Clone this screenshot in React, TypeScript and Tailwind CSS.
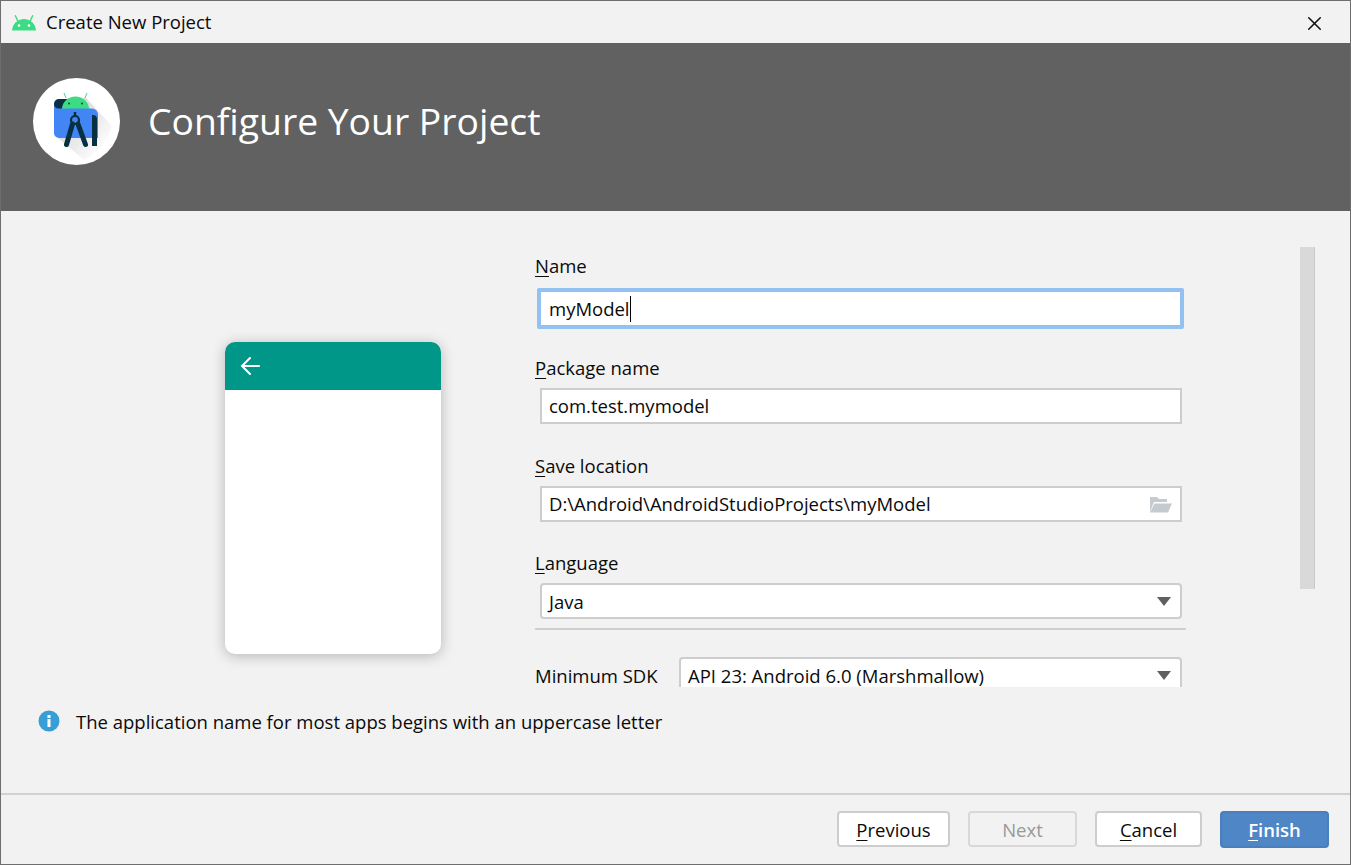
import { X } from "lucide-react";

function AndroidHead({ className }: { className?: string }) {
  return (
    <svg viewBox="0 0 24 17" className={className}>
      <path d="M0 16.500C.4 10 5.500 5 12 5s11.600 5 12 11.500z" fill="#3ddc84" />
      <path d="M5.800 7 3.400 1.800M18.200 7 20.600 1.800" stroke="#3ddc84" strokeWidth="1.500" strokeLinecap="round" />
      <circle cx="7" cy="11.500" r="1.300" fill="#fff" />
      <circle cx="17" cy="11.500" r="1.300" fill="#fff" />
    </svg>
  );
}

function StudioLogo() {
  return (
    <div className="flex h-[87px] w-[87px] shrink-0 items-center justify-center rounded-full bg-white">
      <svg viewBox="33 78 87 87" className="h-[87px] w-[87px]">
        <defs>
          <linearGradient id="logoShadow" x1="0.250" y1="0.250" x2="0.850" y2="0.850">
            <stop offset="0" stopColor="#d8d8d8" />
            <stop offset="1" stopColor="#ffffff" />
          </linearGradient>
        </defs>
        <path d="M85 97 112 126Q106 148 84 160L58 138z" fill="url(#logoShadow)" />
        <path d="M60 99h10v10H58l-4 1v-6a5 5 0 0 1 6-5z" fill="#073042" />
        <path d="M62 109a13.500 12.500 0 0 1 27 0z" fill="#3ddc84" />
        <path d="M66 98 64 93M85 98l2-5" stroke="#3ddc84" strokeWidth="1" />
        <circle cx="69" cy="103.500" r="0.900" fill="#073042" />
        <circle cx="82" cy="103.500" r="0.900" fill="#073042" />
        <path d="M54 104a4.500 4.500 0 0 0 4.500 4.500H92a6 6 0 0 1 6 6V138H59a5 5 0 0 1-5-5z" fill="#4285f4" />
        <path d="M92 115h1a4 4 0 0 1 4 3V146h-5z" fill="#073042" />
        <path d="M75 112v4" stroke="#073042" strokeWidth="2.500" />
        <circle cx="75" cy="120" r="4" fill="#4285f4" stroke="#073042" strokeWidth="2.200" />
        <path d="M72.500 124 66.500 144.500M78 124 85.500 144.500" stroke="#073042" strokeWidth="5" strokeLinecap="round" />
      </svg>
    </div>
  );
}

function Label({ mark, rest }: { mark: string; rest: string }) {
  return (
    <div className="h-[24px] text-[18.500px] leading-[24px]">
      <span className="underline decoration-1 underline-offset-[3px]">{mark}</span>
      {rest}
    </div>
  );
}

function Caret() {
  return (
    <svg viewBox="0 0 14 9" className="h-[9px] w-[14px]">
      <path d="M0 0h14L7 9z" fill="#606060" />
    </svg>
  );
}

function TextField({ value, children }: { value: string; children?: React.ReactNode }) {
  return (
    <div className="mt-[8px] ml-[5px] flex h-[36px] w-[642px] items-center justify-between border-2 border-[#cdcdcd] bg-white pr-[7px] pl-[7px] text-[18.500px]">
      <span>{value}</span>
      {children}
    </div>
  );
}

function Button({ mark, rest, className }: { mark: string; rest: string; className: string }) {
  return (
    <div className={`flex h-[36px] items-center justify-center rounded-[4px] border-2 pt-[1px] text-[18.500px] ${className}`}>
      <span className="underline decoration-1 underline-offset-[3px]">{mark}</span>
      {rest}
    </div>
  );
}

export default function App() {
  return (
    <div
      className="flex h-[865px] w-[1351px] flex-col overflow-hidden border border-[#6e6e6e] bg-[#f2f2f2] text-[#0a0a0a]"
      style={{ fontFamily: '"Open Sans", "Noto Sans", sans-serif' }}
    >
      {/* Title bar */}
      <div className="flex h-[42px] shrink-0 items-center justify-between pr-[24px] pl-[11px]">
        <div className="flex items-center gap-[10px] text-[18.500px]">
          <AndroidHead className="h-[17px] w-[24px]" />
          <span>Create New Project</span>
        </div>
        <X size={23} strokeWidth={1.600} className="mt-[2px] text-[#111]" />
      </div>

      {/* Header */}
      <div className="flex h-[168px] shrink-0 items-center gap-[28px] bg-[#616161] pb-[12px] pl-[32px]">
        <StudioLogo />
        <span className="text-[37.300px] text-white">Configure Your Project</span>
      </div>

      {/* Body */}
      <div className="flex h-[476px] shrink-0">
        <div className="w-[534px] shrink-0 pt-[131px] pl-[224px]">
          <div className="h-[312px] w-[216px] overflow-hidden rounded-[10px] bg-white shadow-[0_2px_14px_rgba(0,0,0,0.25)]">
            <div className="flex h-[48px] items-center bg-[#009688] pl-[15px]">
              <svg viewBox="0 0 20 20" className="h-[20px] w-[20px]">
                <path d="M19 10H2M10 2 2 10l8 8" fill="none" stroke="#fff" strokeWidth="2" strokeLinecap="round" />
              </svg>
            </div>
          </div>
        </div>

        <div className="h-[476px] w-[652px] shrink-0 overflow-hidden pt-[43px]">
          <Label mark="N" rest="ame" />
          <div className="mt-[10px] ml-[2px] flex h-[41px] w-[647px] items-center rounded-[2px] border-4 border-[#93c1f1] bg-white pl-[8px] text-[18.500px]">
            <span>myModel</span>
            <span className="h-[26px] w-[1px] bg-black" />
          </div>

          <div className="mt-[27px]">
            <Label mark="P" rest="ackage name" />
          </div>
          <TextField value="com.test.mymodel" />

          <div className="mt-[30px]">
            <Label mark="S" rest="ave location" />
          </div>
          <TextField value="D:\Android\AndroidStudioProjects\myModel">
            <svg viewBox="0 0 24 17" className="h-[17px] w-[24px]">
              <path d="M1 16V1h7l2 2h8v3H5z" fill="#c3cbd1" />
              <path d="M5.500 7.500H23L19 16.500H1z" fill="#c3cbd1" />
            </svg>
          </TextField>

          <div className="mt-[29px]">
            <Label mark="L" rest="anguage" />
          </div>
          <div className="mt-[8px] ml-[5px] flex h-[36px] w-[642px] items-center justify-between rounded-[4px] border-2 border-[#cdcdcd] bg-white pr-[9px] pl-[7px] text-[18.500px]">
            <span className="pt-[1px]">Java</span>
            <Caret />
          </div>
          <div className="mt-[9px] h-[2px] w-[651px] bg-[#cfcfcf]" />

          <div className="mt-[27px] flex items-center">
            <span className="w-[144px] pt-[1px] text-[18.500px]">Minimum SDK</span>
            <div className="flex h-[36px] w-[503px] items-center justify-between rounded-[4px] border-2 border-[#cdcdcd] bg-white pr-[9px] pl-[7px] text-[18.500px]">
              <span className="pt-[1px]">API 23: Android 6.0 (Marshmallow)</span>
              <Caret />
            </div>
          </div>
        </div>

        <div className="mt-[36px] ml-[113px] h-[342px] w-[15px] shrink-0 border-r border-[#c9c9c9] bg-[#d9d9d9]" />
      </div>

      {/* Info message */}
      <div className="flex h-[106px] shrink-0 items-start gap-[16px] pt-[23px] pl-[37px]">
        <svg viewBox="0 0 22 22" className="h-[22px] w-[22px]">
          <circle cx="11" cy="11" r="10.500" fill="#389fd6" />
          <rect x="9.500" y="5" width="3" height="3" fill="#fff" />
          <rect x="9.500" y="9" width="3" height="8" fill="#fff" />
        </svg>
        <span className="text-[18.500px] leading-[24px]">The application name for most apps begins with an uppercase letter</span>
      </div>

      {/* Footer */}
      <div className="flex h-[70px] shrink-0 items-center justify-end gap-[18px] border-t-2 border-[#d1d1d1] pr-[21px]">
        <Button mark="P" rest="revious" className="w-[113px] border-[#cdcdcd] bg-white" />
        <Button mark="" rest="Next" className="w-[109px] border-[#d8d8d8] text-[#999]" />
        <Button mark="C" rest="ancel" className="w-[107px] border-[#cdcdcd] bg-white" />
        <Button mark="F" rest="inish" className="h-[37px] w-[109px] border-[#4a7fbd] bg-[#4f86c6] font-semibold text-white" />
      </div>
    </div>
  );
}
